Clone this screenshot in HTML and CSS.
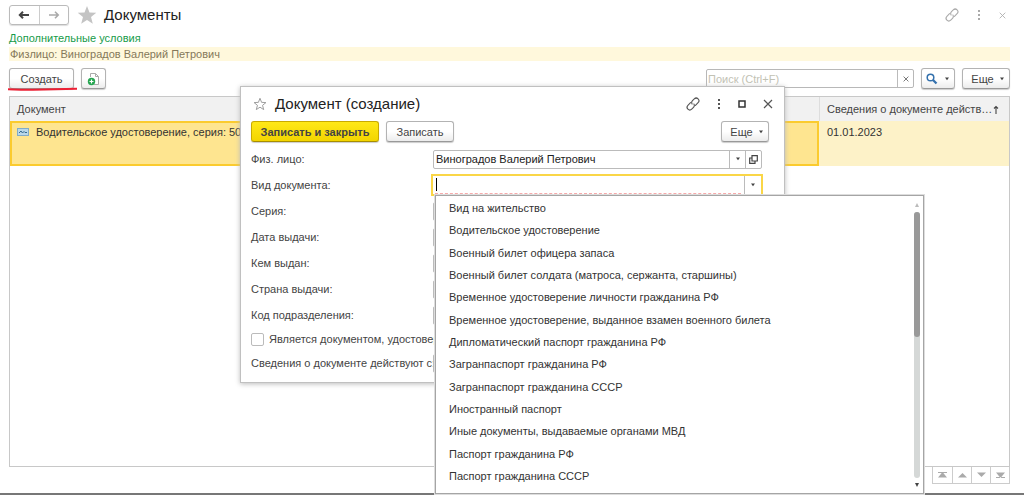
FILE: index.html
```html
<!DOCTYPE html>
<html lang="ru">
<head>
<meta charset="utf-8">
<title>Документы</title>
<link rel="stylesheet" href="styles.css">
</head>
<body>
<svg class="defs" width="0" height="0" aria-hidden="true">
  <symbol id="link" viewBox="0 0 14 14"><g fill="none" stroke="currentColor" stroke-width="1.1" stroke-linecap="round" transform="rotate(-45 7 7)"><path d="M6.200 4.300H2.500a2.700 2.700 0 0 0 0 5.400H5a2.700 2.700 0 0 0 2.600-2"/><path d="M7.800 9.700H11.500a2.700 2.700 0 0 0 0-5.400H9a2.700 2.700 0 0 0-2.600 2"/></g></symbol>
  <symbol id="dots" viewBox="0 0 4 10"><g fill="currentColor"><rect x="1" y="0" width="2" height="2"/><rect x="1" y="4" width="2" height="2"/><rect x="1" y="8" width="2" height="2"/></g></symbol>
  <symbol id="cross" viewBox="0 0 10 10"><path d="M1 1l8 8M9 1l-8 8" stroke="currentColor" stroke-width="1.200" fill="none"/></symbol>
  <symbol id="caret" viewBox="0 0 6 4"><path d="M1 .5h4L3 3.200z" fill="currentColor"/></symbol>
  <symbol id="star" viewBox="0 0 20 20"><path d="M10 1l2.500 6.400 6.800.4-5.300 4.300 1.800 6.700L10 15l-5.800 3.800L6 12.100.7 7.800l6.800-.4z"/></symbol>
</svg>
<main class="page">
  <header class="titlebar">
    <div class="nav">
      <button type="button" aria-label="Назад"><svg width="12" height="10" viewBox="0 0 12 10"><path d="M11 5H2M5 1.800L1.800 5 5 8.200" fill="none" stroke="#444" stroke-width="2"/></svg></button>
      <button type="button" aria-label="Вперед"><svg width="12" height="10" viewBox="0 0 12 10"><path d="M1 5h9M7 1.800L10.200 5 7 8.200" fill="none" stroke="#aaa" stroke-width="1.600"/></svg></button>
    </div>
    <svg class="star-full" width="20" height="20"><use href="#star"/></svg>
    <h1>Документы</h1>
    <div class="window-tools">
      <button type="button" aria-label="Ссылка"><svg width="14" height="14"><use href="#link"/></svg></button>
      <button type="button" aria-label="Меню"><svg width="4" height="10"><use href="#dots"/></svg></button>
      <button type="button" aria-label="Закрыть"><svg width="7" height="7"><use href="#cross"/></svg></button>
    </div>
  </header>
  <a class="conditions" href="#">Дополнительные условия</a>
  <p class="filter">Физлицо: Виноградов Валерий Петрович</p>
  <div class="toolbar">
    <div class="create-wrap">
      <button class="btn create" type="button">Создать</button>
      <svg class="underline" width="70" height="4" viewBox="0 0 70 4"><path d="M0 2.200Q20 3 36 2.600T69 1.800" fill="none" stroke="#ed2034" stroke-width="2"/></svg>
    </div>
    <button class="btn copy" type="button" aria-label="Создать копированием"><svg width="14" height="14" viewBox="0 0 14 14"><path d="M3.500 5V1.500h5l3 3v8H7" fill="#fff" stroke="#aaa"/><path d="M8.500 1.500v3h3" fill="none" stroke="#aaa"/><circle cx="4.500" cy="9.500" r="3.700" fill="#26a551"/><path d="M4.500 7.500v4M2.500 9.500h4" stroke="#fff" stroke-width="1.200"/></svg></button>
    <div class="search">
      <input type="text" placeholder="Поиск (Ctrl+F)" aria-label="Поиск">
      <button type="button" aria-label="Очистить"><svg width="6" height="6"><use href="#cross"/></svg></button>
    </div>
    <button class="btn find" type="button" aria-label="Найти"><svg width="12" height="12" viewBox="0 0 12 12"><circle cx="4.500" cy="4.500" r="3.300" fill="none" stroke="#3471ad" stroke-width="1.500"/><path d="M7 7l3.500 3.500" stroke="#3471ad" stroke-width="2.300"/></svg><svg width="6" height="4"><use href="#caret"/></svg></button>
    <button class="btn more" type="button">Еще <svg width="6" height="4"><use href="#caret"/></svg></button>
  </div>
  <div class="list">
    <table>
      <thead><tr><th>Документ</th><th class="date"><div class="sort"><span>Сведения о документе действ…</span><svg width="6" height="9" viewBox="0 0 6 9"><path d="M3 9V1.500M1 3.500l2-2 2 2" fill="none" stroke="#444" stroke-width="1.100"/></svg></div></th></tr></thead>
      <tbody><tr><td class="current"><svg width="12" height="8" viewBox="0 0 12 8"><rect x=".5" y=".5" width="11" height="7" fill="#b9d8ea" stroke="#82acc8"/><path d="M2 5l2-2 1.500 2L7 3.500 8 4.500h2" fill="none" stroke="#35698f"/></svg>Водительское удостоверение, серия: 50 4</td><td class="date">01.01.2023</td></tr></tbody>
    </table>
  </div>
  <div class="pager">
    <button type="button" aria-label="В начало"><svg width="9" height="6" viewBox="0 0 9 6"><path d="M0 0h9v1H0zM4.500 0L9 5.500H0z"/></svg></button>
    <button type="button" aria-label="Вверх"><svg width="9" height="6" viewBox="0 0 9 6"><path d="M4.500 1L9 5.500H0z"/></svg></button>
    <button type="button" aria-label="Вниз"><svg width="9" height="6" viewBox="0 0 9 6"><path d="M4.500 5L9 .5H0z"/></svg></button>
    <button type="button" aria-label="В конец"><svg width="9" height="6" viewBox="0 0 9 6"><path d="M0 5h9v1H0zM4.500 6L9 .5H0z"/></svg></button>
  </div>
</main>
<section class="dialog" role="dialog" aria-labelledby="dialog-title">
  <header class="dialog-head">
    <svg class="star-line" width="14" height="14" viewBox="-1 -1 22 22"><use href="#star" width="20" height="20"/></svg>
    <h2 id="dialog-title">Документ (создание)</h2>
    <div class="dialog-tools">
      <button type="button" aria-label="Ссылка"><svg width="14" height="14"><use href="#link"/></svg></button>
      <button type="button" aria-label="Меню"><svg width="4" height="10"><use href="#dots"/></svg></button>
      <button type="button" aria-label="Развернуть"><svg width="8" height="8" viewBox="0 0 8 8"><path d="M1 1h6v6H1z" fill="none" stroke="#333" stroke-width="1.500"/></svg></button>
      <button type="button" aria-label="Закрыть"><svg width="10" height="10"><use href="#cross"/></svg></button>
    </div>
  </header>
  <div class="dialog-bar">
    <button class="btn primary" type="button">Записать и закрыть</button>
    <button class="btn save" type="button">Записать</button>
    <button class="btn more" type="button">Еще <svg width="6" height="4"><use href="#caret"/></svg></button>
  </div>
  <form class="form">
    <div class="row"><label for="person">Физ. лицо:</label>
      <div class="field"><input id="person" type="text" value="Виноградов Валерий Петрович"><button type="button" aria-label="Выбрать"><svg width="6" height="4"><use href="#caret"/></svg></button><button type="button" aria-label="Открыть"><svg width="9" height="9" viewBox="0 0 9 9"><path d="M3 .7h5.300V6H3zM2.500 3H.7v5.300H6V6.500" fill="none" stroke="#444" stroke-width="1.200"/></svg></button></div></div>
    <div class="row"><label for="kind">Вид документа:</label>
      <div class="field active"><div class="entry"><input id="kind" type="text"></div><button type="button" aria-label="Выбрать"><svg width="6" height="4"><use href="#caret"/></svg></button>
        <div class="dropdown">
          <ul>
            <li>Вид на жительство</li>
            <li>Водительское удостоверение</li>
            <li>Военный билет офицера запаса</li>
            <li>Военный билет солдата (матроса, сержанта, старшины)</li>
            <li>Временное удостоверение личности гражданина РФ</li>
            <li>Временное удостоверение, выданное взамен военного билета</li>
            <li>Дипломатический паспорт гражданина РФ</li>
            <li>Загранпаспорт гражданина РФ</li>
            <li>Загранпаспорт гражданина СССР</li>
            <li>Иностранный паспорт</li>
            <li>Иные документы, выдаваемые органами МВД</li>
            <li>Паспорт гражданина РФ</li>
            <li>Паспорт гражданина СССР</li>
          </ul>
          <div class="scroll"><svg width="4" height="4" viewBox="0 0 4 4"><path d="M2 0l2 4H0z" fill="#bbb"/></svg><div class="track"><div class="thumb"></div></div><svg width="4" height="4" viewBox="0 0 4 4"><path d="M2 4l2-4H0z" fill="#444"/></svg></div>
        </div>
      </div></div>
    <div class="row"><label for="series">Серия:</label><div class="field"><input id="series" type="text"></div></div>
    <div class="row"><label for="issued">Дата выдачи:</label><div class="field"><input id="issued" type="text"></div></div>
    <div class="row"><label for="issuer">Кем выдан:</label><div class="field"><input id="issuer" type="text"></div></div>
    <div class="row"><label for="country">Страна выдачи:</label><div class="field"><input id="country" type="text"></div></div>
    <div class="row"><label for="code">Код подразделения:</label><div class="field"><input id="code" type="text"></div></div>
    <div class="check"><input id="identity" type="checkbox"><label for="identity">Является документом, удостоверя</label></div>
    <div class="row"><label for="since">Сведения о документе действуют с:</label><div class="field"><input id="since" type="text"></div></div>
  </form>
</section>
</body>
</html>
```
FILE: styles.css
```css
* { box-sizing: border-box; }
body {
  margin: 0;
  min-height: 100vh;
  position: relative;
  background: #fff;
  color: #444;
  font: 11px/14px "Liberation Sans", Arial, sans-serif;
}
button, input { font: inherit; color: inherit; }
button { padding: 0; border: 0; background: none; display: flex; align-items: center; justify-content: center; }
svg { display: block; flex: none; }
h1, h2 { margin: 0; font-weight: 400; font-size: 15px; line-height: 20px; color: #222; }
.defs { position: absolute; }

.page { min-height: 100vh; padding: 5px 14px 0 9px; display: flex; flex-direction: column; border-bottom: 2px solid #777; }
.titlebar { display: flex; align-items: center; height: 20px; }
.nav { display: flex; width: 60px; height: 20px; border: 1px solid #bbb; border-radius: 3px; box-shadow: 0 1px 1px #ddd; }
.nav button { flex: 1; }
.nav button + button { border-left: 1px solid #ccc; }
.star-full { margin: 0 7px 0 8px; fill: #c4c4c4; }
.window-tools { margin-left: auto; display: flex; align-items: center; gap: 18px; color: #aaa; padding-right: 4px; }

.conditions { color: #169b49; text-decoration: none; margin-top: 6px; align-self: flex-start; }
.filter { margin: 2px 0 0; padding-left: 1px; background: #fff8dc; color: #85785a; line-height: 14px; }

.toolbar { display: flex; align-items: center; margin-top: 7px; height: 21px; }
.btn {
  height: 21px;
  border: 1px solid #b3b3b3;
  border-bottom-color: #999;
  border-radius: 3px;
  background: linear-gradient(#fff 50%, #ececec);
  box-shadow: 0 1px 1px #ccc;
}
.create-wrap { position: relative; }
.create { width: 65px; }
.underline { position: absolute; left: -1px; top: 19px; }
.copy { width: 25px; margin-left: 7px; }
.search { display: flex; margin-left: auto; width: 208px; height: 19px; border: 1px solid #b8b8b8; border-radius: 2px; }
.search input { flex: 1; min-width: 0; border: 0; padding: 0 1px; outline: 0; background: none; }
.search input::placeholder { color: #c2c2b4; opacity: 1; }
.search button { width: 16px; border-left: 1px solid #bbb; }
.find { width: 34px; margin-left: 7px; gap: 6px; }
.more { width: 48px; gap: 5px; padding-left: 4px; }
.toolbar .more { margin-left: 7px; }

.list { margin-top: 7px; flex: 1; border: 1px solid #c8c8c8; }
table { width: 100%; border-collapse: separate; border-spacing: 0; table-layout: fixed; }
th { height: 24px; padding: 0 7px; background: #f1f1f1; text-align: left; font-weight: 400; }
th.date { width: 190px; border-left: 1px solid #ddd; }
.sort { display: flex; align-items: center; gap: 1px; white-space: nowrap; }
td { height: 45px; padding: 4px 7px; vertical-align: top; background: #fdf2c8; color: #333; }
td.current { background: #fee590; border: 2px solid #fbcb2e; padding: 2px 5px; }
td.current svg { display: inline-block; margin-right: 7px; }
td.date { padding-left: 8px; }
.pager { align-self: flex-end; display: flex; height: 17px; margin-bottom: 9px; border: 1px solid #ccc; border-top: 0; }
.pager button { width: 19px; }
.pager button + button { border-left: 1px solid #ccc; }
.pager svg { fill: #aaa; }

.dialog {
  position: absolute;
  left: 240px;
  top: 86px;
  width: 545px;
  padding: 7px 10px 9px 10px;
  background: #fff;
  border: 1px solid #c0c0c0;
  box-shadow: 0 1px 5px #bbb;
}
.dialog-head { display: flex; align-items: center; height: 20px; padding-left: 2px; }
.star-line { fill: none; stroke: #999; stroke-width: 1.5px; margin-right: 8px; }
.dialog-tools { margin-left: auto; display: flex; align-items: center; gap: 17px; padding-right: 1px; color: #555; }
.dialog-bar { display: flex; margin: 7px 5px 7px 0; }
.primary { width: 128px; font-weight: 700; border-color: #c9aa00; border-bottom-color: #a88e00; background: linear-gradient(#ffe817, #f3d500); }
.save { width: 68px; margin-left: 7px; }
.dialog-bar .more { margin-left: auto; }
.form { display: flex; flex-direction: column; gap: 6px; padding-right: 12px; }
.row { display: grid; grid-template: 20px / 182px 1fr; align-items: center; white-space: nowrap; }
.field { display: flex; height: 19px; border: 1px solid #bbb; border-radius: 2px; position: relative; background: #fff; }
.field input { flex: 1; min-width: 0; border: 0; outline: 0; padding: 0 2px; background: none; color: #222; }
.field > button { width: 16px; border-left: 1px solid #bbb; }
.active { height: 22px; margin: 0 -1px 0 -2px; border: 2px solid #fad647; border-radius: 0; }
.entry { flex: 1; display: flex; align-items: center; margin: 0 3px 0 2px; border-bottom: 1px dashed #f6aaaa; }
.entry::before { content: ""; width: 1px; height: 13px; margin-left: 1px; background: #000; }
.active > button { width: 17px; }
.check { display: flex; align-items: center; gap: 5px; height: 16px; white-space: nowrap; }
.check input { appearance: none; width: 13px; height: 13px; margin: 0; border: 1px solid #bbb; border-radius: 2px; }

.dropdown {
  position: absolute;
  z-index: 1;
  top: 19px;
  left: 2px;
  width: 489px;
  height: 299px;
  display: flex;
  padding: 1px 2px 6px 13px;
  background: #fff;
  border: 1px solid #a5a5a5;
  box-shadow: 0 0 0 1px #ddd;
  color: #333;
}
.dropdown ul { flex: 1; display: grid; grid-auto-rows: 1fr; align-items: center; margin: 0; padding: 0; list-style: none; }
.scroll { display: flex; flex-direction: column; align-items: center; width: 8px; padding-top: 6px; gap: 5px; }
.track { flex: 1; width: 6px; border-radius: 3px; background: #d5d8d7; }
.thumb { width: 6px; height: 47%; border-radius: 3px; background: #999; }
```
